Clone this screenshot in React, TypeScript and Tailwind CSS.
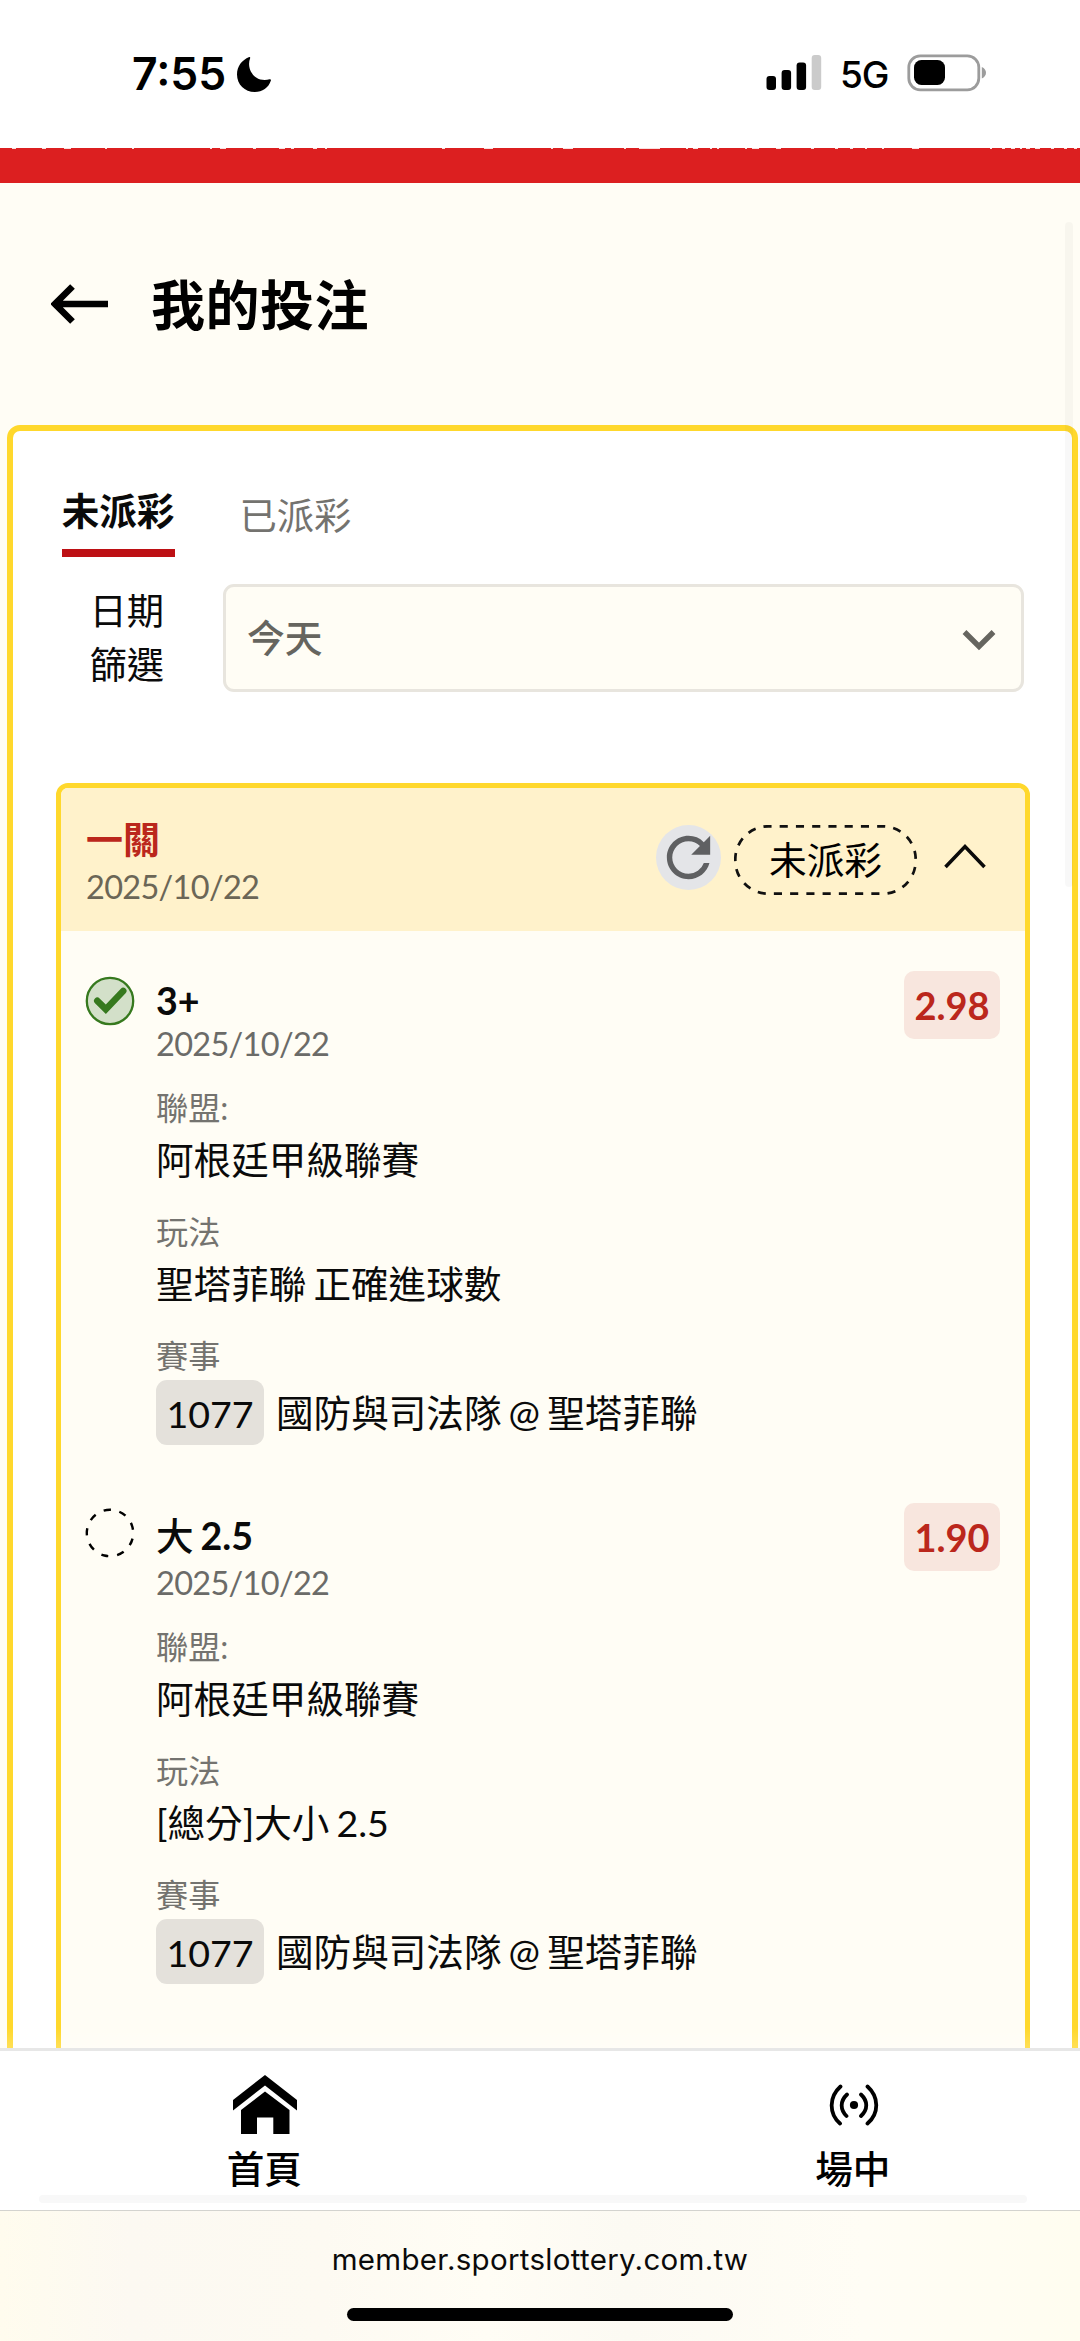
import React from "react";

type Field = { label: string; value: string; code?: string };
type Bet = { title: string; titleHeight: string; date: string; odds: string; won: boolean; fields: Field[] };

const bets: Bet[] = [
  {
    title: "3+",
    titleHeight: "h-[44px] leading-[45px]",
    date: "2025/10/22",
    odds: "2.98",
    won: true,
    fields: [
      { label: "聯盟:", value: "阿根廷甲級聯賽" },
      { label: "玩法", value: "聖塔菲聯 正確進球數" },
      { label: "賽事", value: "國防與司法隊 @ 聖塔菲聯", code: "1077" },
    ],
  },
  {
    title: "大 2.5",
    titleHeight: "h-[51px] leading-[51px]",
    date: "2025/10/22",
    odds: "1.90",
    won: false,
    fields: [
      { label: "聯盟:", value: "阿根廷甲級聯賽" },
      { label: "玩法", value: "[總分]大小 2.5" },
      { label: "賽事", value: "國防與司法隊 @ 聖塔菲聯", code: "1077" },
    ],
  },
];

// Tops of a scrolled-away caption that peek into the red strip: [x, width]
const flecks: [number, number][] = [
  [12, 4], [42, 4], [64, 7], [105, 2], [132, 2], [210, 2], [220, 6], [253, 3], [279, 6], [291, 3], [313, 4], [325, 2],
  [442, 3], [484, 9], [551, 2], [563, 10], [624, 2], [639, 21], [686, 2], [693, 5], [710, 2], [717, 2], [745, 2],
  [752, 7], [776, 5], [811, 3], [835, 3], [850, 3], [865, 2], [882, 2], [912, 7], [990, 2], [1002, 3], [1011, 4],
  [1020, 2], [1026, 4], [1035, 5], [1051, 3], [1064, 3], [1074, 3],
];

function StatusBar() {
  return (
    <header className="flex h-[148px] shrink-0 items-start justify-between bg-white pl-[132px] pr-[93px] pt-[54px] text-black">
      <div className="flex h-[40px] items-center">
        <span className="w-[104px] whitespace-nowrap font-['Inter'] text-[44.5px] font-semibold leading-[40px]">7:55</span>
        <svg width="36" height="36" viewBox="0 0 36 36" className="mt-[-1px]">
          <path
            d="M13.2 1.1C13.7 .8 14.4 1.3 14.2 2C11.2 9.800 14.500 17.600 20.200 21.600C24.300 24.400 29.700 24.700 33.500 23.300C34.400 23 35.200 23.500 34.900 24.500C32.600 31.800 26.300 36 18.800 36C8.700 36 1 28.200 1 18.400C1 10.500 5.800 4.200 13.200 1.100Z"
            fill="#000"
          />
        </svg>
      </div>
      <div className="flex h-[38px] items-center">
        <svg width="56" height="38" viewBox="0 0 56 38" className="ml-[-1px]">
          <rect x="0.5" y="22" width="9.500" height="14" rx="3" />
          <rect x="15.600" y="16" width="9.500" height="20" rx="3" />
          <rect x="30.600" y="8.500" width="9.500" height="27.500" rx="3" />
          <rect x="45.700" y="1" width="9.500" height="35" rx="3" fill="#cbcbcb" />
        </svg>
        <span className="ml-[18px] mt-[4px] w-[67px] font-['Inter'] text-[37px] font-medium leading-[38px] tracking-[-1px]">5G</span>
        <svg width="80" height="38" viewBox="0 0 80 38">
          <rect x="1.800" y="1.800" width="70" height="34" rx="11.500" fill="none" stroke="#9c9c9c" strokeWidth="2.800" />
          <rect x="7" y="6" width="31" height="25" rx="7.500" />
          <path d="M74.800 13C77.500 14.200 79 16.300 79 18.700S77.500 23.200 74.800 24.400Z" fill="#9c9c9c" />
        </svg>
      </div>
    </header>
  );
}

function PromoStrip() {
  return (
    <div className="h-[35px] shrink-0 bg-[#dc1f20]">
      <svg width="1080" height="2" viewBox="0 0 1080 2" className="block">
        {flecks.map(([x, w]) => (
          <rect key={x} x={x} y="0" width={w} height="1" fill="#fff" opacity="0.85" />
        ))}
      </svg>
    </div>
  );
}

function StatusIcon({ won }: { won: boolean }) {
  return won ? (
    <svg width="50" height="50" viewBox="0 0 50 50">
      <circle cx="25" cy="25" r="23.200" fill="#d3e0c9" stroke="#36791e" strokeWidth="2.300" />
      <path d="M12.300 24.800L20.800 33.200L38.200 15" fill="none" stroke="#36791e" strokeWidth="6.600" strokeLinecap="round" />
    </svg>
  ) : (
    <svg width="50" height="50" viewBox="0 0 50 50">
      <circle
        cx="25"
        cy="25"
        r="23.200"
        fill="none"
        stroke="#000"
        strokeWidth="2.400"
        pathLength="18"
        strokeDasharray="0.9 1.1"
        transform="rotate(14 25 25)"
      />
    </svg>
  );
}

// Latin parts of a title are set bold, the CJK part medium
function TitleText({ text }: { text: string }) {
  return (
    <>
      {text.split(" ").map((part, i) => (
        <React.Fragment key={part}>
          {i > 0 && " "}
          <span className={/^[\d.+]+$/.test(part) ? "font-bold" : "font-medium"}>{part}</span>
        </React.Fragment>
      ))}
    </>
  );
}

function BetItem({ bet }: { bet: Bet }) {
  return (
    <article className="flex items-start">
      <div className="mt-[5px] w-[71px] shrink-0">
        <StatusIcon won={bet.won} />
      </div>
      <div className="flex-1 pt-[7px]">
        <h3 className={"text-[37.600px] font-medium [word-spacing:-2.500px] " + bet.titleHeight}>
          <TitleText text={bet.title} />
        </h3>
        <p className="h-[44px] text-[32.500px] leading-[43px] tracking-[-0.700px] text-[#6b6b68]">{bet.date}</p>
        <dl className="mt-[19px] flex flex-col gap-[20px]">
          {bet.fields.map((f) => (
            <div key={f.label}>
              <dt className="h-[46px] text-[32.200px] leading-[46px] text-[#74736f]">{f.label}</dt>
              {f.code ? (
                <dd className="mt-px flex h-[65px] items-center gap-[12px] whitespace-nowrap text-[37.600px]">
                  <span className="flex h-[65px] w-[108px] items-center justify-center rounded-[11px] bg-[#e4e1db] pt-[3px]">{f.code}</span>
                  <span className="pt-[2px] [word-spacing:-2.500px]">{f.value}</span>
                </dd>
              ) : (
                <dd className="h-[58px] whitespace-nowrap text-[37.600px] leading-[58px] [word-spacing:-2.500px]">{f.value}</dd>
              )}
            </div>
          ))}
        </dl>
      </div>
      <span className="flex h-[68px] w-[96px] items-center justify-center rounded-[10px] bg-[#f8e6de] pt-[1px] text-[38px] font-bold text-[#bb271c]">
        {bet.odds}
      </span>
    </article>
  );
}

function BetCard() {
  return (
    <section className="ml-[43px] mr-[42px] mt-[91px] overflow-hidden rounded-[12px] border-[5px] border-[#ffd82c] bg-[#fffdf5]">
      <div className="flex h-[143px] items-start bg-[#fff2cb] pl-[25px] pr-[38px]">
        <div className="flex-1 pt-[29px]">
          <h2 className="h-[46px] text-[37px] font-bold leading-[46px] text-[#bb271c]">一關</h2>
          <p className="h-[46px] text-[32.500px] leading-[47px] tracking-[-0.700px] text-[#6b6656]">2025/10/22</p>
        </div>
        <button className="mt-[37px] flex size-[65px] items-center justify-center rounded-full bg-[#e4e5e8]">
          <svg width="65" height="65" viewBox="0 0 24 24" className="shrink-0">
            <path
              d="M17.650 6.350A7.958 7.958 0 0 0 12 4c-4.420 0-7.990 3.580-7.990 8s3.570 8 7.990 8c3.730 0 6.840-2.550 7.730-6h-2.080A5.990 5.990 0 0 1 12 18c-3.310 0-6-2.690-6-6s2.690-6 6-6c1.660 0 3.140.69 4.220 1.780L13 11h7V4l-2.350 2.350z"
              fill="#5f6062"
            />
          </svg>
        </button>
        <div className="relative ml-[13px] mt-[37px] flex h-[70px] w-[183px] items-center justify-center text-[37.700px] text-black">
          <svg width="183" height="70" viewBox="0 0 183 70" className="absolute inset-0">
            <rect
              x="1.300"
              y="1.300"
              width="180.400"
              height="67.400"
              rx="33"
              fill="none"
              stroke="#111"
              strokeWidth="2.700"
              pathLength="54"
              strokeDasharray="1 1"
              strokeDashoffset="0.600"
            />
          </svg>
          <span className="pt-px">未派彩</span>
        </div>
        <svg width="44" height="28" viewBox="0 0 44 28" className="ml-[26px] mt-[54px]">
          <path d="M2.500 25L22 4.500L41.500 25" fill="none" stroke="#0a0a0a" strokeWidth="3.600" />
        </svg>
      </div>
      <div className="flex flex-col gap-[58px] pb-[200px] pl-[24px] pr-[25px] pt-[40px]">
        {bets.map((b) => (
          <BetItem key={b.title} bet={b} />
        ))}
      </div>
    </section>
  );
}

function BottomNav() {
  return (
    <nav className="relative flex h-[162px] shrink-0 border-t-[3px] border-[#e7e7e7] bg-white text-[37.600px] font-medium text-black">
      <a className="flex w-[531px] flex-col items-center">
        <svg width="66" height="60" viewBox="0 0 66 60" className="mt-[23px]">
          <path d="M33 1L65 26V36.500L33 11.500L1 36.500V26Z" />
          <path d="M33 17.500L57.500 36V60H41.300V43.500H25V60H9V36Z" />
        </svg>
        <span className="mr-[2px] mt-[10px] h-[50px] leading-[50px]">首頁</span>
      </a>
      <a className="ml-[97px] flex w-[453px] flex-col items-center">
        <svg width="50" height="42" viewBox="0 0 50 42" className="mt-[33px]" fill="none" stroke="#000" strokeWidth="3.800" strokeLinecap="round">
          <circle cx="25" cy="21" r="4.100" fill="#000" stroke="none" />
          <path d="M11.500 2.500C-.2 13 -.2 29.500 11 39.500M38.500 2.500C50.200 13 50.200 29.500 38.500 39.500M18 10.500C11 17 11 25.500 17.500 32M32 10.500C39 17 39 25.500 32 32" />
        </svg>
        <span className="mr-[2px] mt-[18px] h-[50px] leading-[50px]">場中</span>
      </a>
      <div className="absolute bottom-[7px] left-[39px] h-[8px] w-[988px] rounded-full bg-[#f8f8f8]" />
    </nav>
  );
}

export default function App() {
  return (
    <div className="flex h-[2341px] w-[1080px] flex-col overflow-hidden bg-[#fffdf5] font-['Lato','Noto_Sans_CJK_TC',sans-serif] text-[#0a0a0a]">
      <StatusBar />
      <PromoStrip />
      <main className="relative h-[1865px] shrink-0 overflow-hidden">
        <div className="flex h-[242px] items-start pl-[51px] pt-[92px]">
          <svg width="58" height="40" viewBox="0 0 58 40" className="mt-[9px]">
            <path d="M57 20H4M21.500 2.500L4 20L21.500 37.500" fill="none" stroke="#000" strokeWidth="6.600" />
          </svg>
          <h1 className="ml-[42px] h-[62px] text-[54px] font-bold leading-[62px] tracking-[0.500px] text-black">我的投注</h1>
        </div>
        <div className="ml-[7px] mr-[2px] h-[2000px] rounded-[13px] border-[6px] border-[#ffd82c] bg-white">
          <div className="ml-[48.500px] flex h-[127px] items-start pt-[55px]">
            <div className="flex h-[71px] w-[113px] justify-center whitespace-nowrap border-b-[8px] border-[#bd1014] text-[37.600px] font-bold leading-[50px]">
              未派彩
            </div>
            <div className="ml-[65px] mt-[5px] text-[37.300px] leading-[50px] text-[#74736f]">已派彩</div>
          </div>
          <div className="ml-[76.500px] flex items-start pt-[26px]">
            <p className="w-[76px] text-[37.300px] leading-[54px]">
              日期
              <br />
              篩選
            </p>
            <div className="ml-[57.500px] flex h-[108px] w-[801px] items-center justify-between rounded-[11px] border-[3px] border-[#e8e5de] bg-[#fffdf5] pl-[21px] pr-[24px]">
              <span className="text-[37.700px] font-medium text-[#66655f]">今天</span>
              <svg width="36" height="24" viewBox="0 0 36 24" className="mt-[3px]">
                <path d="M3.500 4L18 18.500L32.500 4" fill="none" stroke="#66655f" strokeWidth="5.400" />
              </svg>
            </div>
          </div>
          <BetCard />
        </div>
        <div className="absolute right-[7px] top-[39px] h-[665px] w-[8px] rounded-full bg-black/[0.027]" />
        <div className="absolute inset-x-0 bottom-0 h-[20px] bg-gradient-to-b from-white/0 to-white/20" />
      </main>
      <BottomNav />
      <footer className="flex h-[131px] flex-col items-center border-t border-[#d3d3cf] bg-[linear-gradient(90deg,#fffcee_0%,#fcf9f2_12%,#fdfaf2_30%,#fffdf5_45%,#fcfaf3_58%,#fffdf5_80%,#fffdf0_100%)]">
        <span className="mt-[26px] h-[44px] font-['Inter'] text-[29.500px] leading-[44px] tracking-[0.300px] text-[#0a0a0a]">
          member.sportslottery.com.tw
        </span>
        <div className="mt-[27px] h-[13px] w-[386px] rounded-full bg-black" />
      </footer>
    </div>
  );
}
